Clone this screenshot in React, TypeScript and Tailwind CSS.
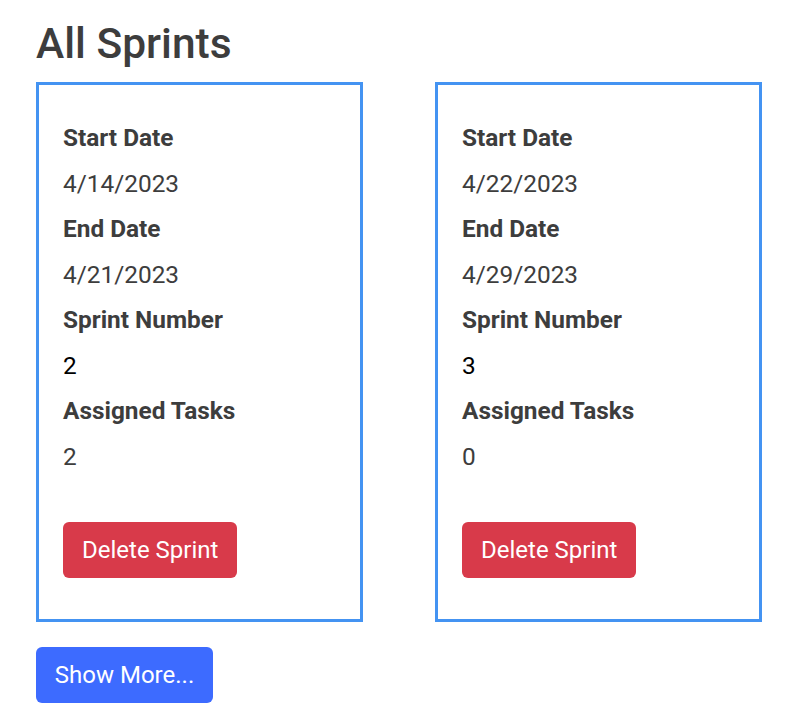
import React from "react";

type Sprint = { start: string; end: string; num: string; tasks: string };

const sprints: Sprint[] = [
  { start: "4/14/2023", end: "4/21/2023", num: "2", tasks: "2" },
  { start: "4/22/2023", end: "4/29/2023", num: "3", tasks: "0" },
];

function Card({ s }: { s: Sprint }) {
  return (
    <div className="w-[327px] h-[540px] border-[3px] border-[#4493f2] pl-[24px] pt-[30px]">
      <div className="text-[24.4px] leading-[45.5px] text-[#3d3d3d]">
        <div className="font-bold">Start Date</div>
        <div>{s.start}</div>
        <div className="font-bold">End Date</div>
        <div>{s.end}</div>
        <div className="font-bold">Sprint Number</div>
        <div className="text-black">{s.num}</div>
        <div className="font-bold">Assigned Tasks</div>
        <div>{s.tasks}</div>
      </div>
      <button className="mt-[42.5px] h-[56px] px-[19px] rounded-[6px] bg-[#d83a4a] text-white text-[24px] leading-none">
        Delete Sprint
      </button>
    </div>
  );
}

export default function App() {
  return (
    <div
      className="bg-white w-[802px] h-[721px] pl-[36px] pt-[19px]"
      style={{ fontFamily: "Roboto, 'Liberation Sans', sans-serif" }}
    >
      <h1 className="text-[42.5px] leading-[50px] font-medium text-[#3d3d3d] h-[63px]">All Sprints</h1>
      <div className="flex gap-[72px]">
        {sprints.map((s, i) => (
          <Card key={i} s={s} />
        ))}
      </div>
      <button className="mt-[25px] h-[56px] w-[177px] rounded-[6px] bg-[#3d6bff] text-white text-[24px] leading-none">
        Show More...
      </button>
    </div>
  );
}
